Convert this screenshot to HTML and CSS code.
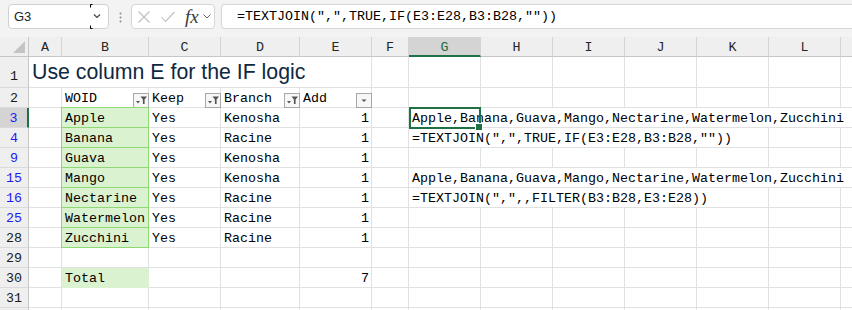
FILE: index.html
```html
<!DOCTYPE html>
<html lang="en">
<head>
  <meta charset="UTF-8" />
  <title>TEXTJOIN with IF</title>
  <link rel="stylesheet" href="styles.css">
</head>
<body>
  <div class="toolbar">
    <div class="namebox">
      <span class="ref">G3</span>
      <span class="drop">
        <svg width="19" height="23" viewBox="0 0 19 23">
          <path d="M1.5 2.5 V-0.5 H3.5 M1.5 20.5 V23.5 H3.5" stroke="#000" fill="none" />
          <polyline points="5,9.5 8,12.5 11,9.5" stroke="#444" stroke-width="1.2" fill="none" />
        </svg>
      </span>
    </div>
    <svg class="dots" width="3" height="11" viewBox="0 0 3 11">
      <circle cx="1.5" cy="1.5" r="1" fill="#8c8c8c" />
      <circle cx="1.5" cy="5.5" r="1" fill="#8c8c8c" />
      <circle cx="1.5" cy="9.5" r="1" fill="#8c8c8c" />
    </svg>
    <div class="fxbox">
      <svg class="x" width="12" height="12" viewBox="0 0 12 12">
        <path d="M0.5 0.5 L11.5 11.5 M11.5 0.5 L0.5 11.5" stroke="#bfbfbf" stroke-width="1.1" />
      </svg>
      <svg class="ok" width="14" height="12" viewBox="0 0 14 12">
        <polyline points="0.5,6 4.5,10.5 13.5,1" stroke="#bfbfbf" stroke-width="1.1" fill="none" />
      </svg>
      <span class="fx">fx</span>
      <svg class="chev" width="8" height="5" viewBox="0 0 8 5">
        <polyline points="0.5,0.5 4,4 7.5,0.5" stroke="#666" fill="none" />
      </svg>
    </div>
    <div class="formula">=TEXTJOIN(",",TRUE,IF(E3:E28,B3:B28,""))</div>
  </div>

  <div class="sheet">
    <!-- column headers -->
    <div class="corner">
      <svg width="29" height="20" viewBox="0 0 29 20"><polygon points="13,16 25,16 25,4" fill="#c4c4c4" /></svg>
    </div>
    <div class="hd">A</div>
    <div class="hd">B</div>
    <div class="hd">C</div>
    <div class="hd">D</div>
    <div class="hd">E</div>
    <div class="hd">F</div>
    <div class="hd on">G</div>
    <div class="hd">H</div>
    <div class="hd">I</div>
    <div class="hd">J</div>
    <div class="hd">K</div>
    <div class="hd">L</div>
    <div class="hd"></div>

    <!-- row 1 -->
    <div class="rh tall">1</div>
    <div class="c title">Use column E for the IF logic</div>
    <div class="c"></div><div class="c"></div><div class="c"></div><div class="c"></div>
    <div class="c"></div><div class="c"></div><div class="c"></div><div class="c"></div>

    <!-- row 2 -->
    <div class="rh">2</div>
    <div class="c"></div>
    <div class="c flt"><span>WOID</span><span class="fbtn"><svg width="14" height="13" viewBox="0 0 14 13"><polygon points="2,7 6,7 4,9.5" fill="#555" /><polygon points="6.5,2.5 13,2.5 10.6,5.4 10.6,10 8.9,10 8.9,5.4" fill="#555" /></svg></span></div>
    <div class="c flt"><span>Keep</span><span class="fbtn"><svg width="14" height="13" viewBox="0 0 14 13"><polygon points="2,7 6,7 4,9.5" fill="#555" /><polygon points="6.5,2.5 13,2.5 10.6,5.4 10.6,10 8.9,10 8.9,5.4" fill="#555" /></svg></span></div>
    <div class="c flt"><span>Branch</span><span class="fbtn"><svg width="14" height="13" viewBox="0 0 14 13"><polygon points="2,7 6,7 4,9.5" fill="#555" /><polygon points="6.5,2.5 13,2.5 10.6,5.4 10.6,10 8.9,10 8.9,5.4" fill="#555" /></svg></span></div>
    <div class="c flt"><span>Add</span><span class="fbtn"><svg width="14" height="13" viewBox="0 0 14 13"><polygon points="4.5,5.5 9.5,5.5 7,8" fill="#555" /></svg></span></div>
    <div class="c"></div><div class="c"></div><div class="c"></div><div class="c"></div>
    <div class="c"></div><div class="c"></div><div class="c"></div><div class="c"></div>

    <!-- row 3 -->
    <div class="rh f on">3</div>
    <div class="c"></div>
    <div class="c gb">Apple</div>
    <div class="c">Yes</div>
    <div class="c">Kenosha</div>
    <div class="c num">1</div>
    <div class="c"></div>
    <div class="c s7">Apple,Banana,Guava,Mango,Nectarine,Watermelon,Zucchini</div>

    <!-- row 4 -->
    <div class="rh f">4</div>
    <div class="c"></div>
    <div class="c gb">Banana</div>
    <div class="c">Yes</div>
    <div class="c">Racine</div>
    <div class="c num">1</div>
    <div class="c"></div>
    <div class="c s5">=TEXTJOIN(",",TRUE,IF(E3:E28,B3:B28,""))</div>
    <div class="c"></div><div class="c"></div>

    <!-- row 9 -->
    <div class="rh f">9</div>
    <div class="c"></div>
    <div class="c gb">Guava</div>
    <div class="c">Yes</div>
    <div class="c">Kenosha</div>
    <div class="c num">1</div>
    <div class="c"></div>
    <div class="c"></div><div class="c"></div><div class="c"></div><div class="c"></div>
    <div class="c"></div><div class="c"></div><div class="c"></div>

    <!-- row 15 -->
    <div class="rh f">15</div>
    <div class="c"></div>
    <div class="c gb">Mango</div>
    <div class="c">Yes</div>
    <div class="c">Kenosha</div>
    <div class="c num">1</div>
    <div class="c"></div>
    <div class="c s7">Apple,Banana,Guava,Mango,Nectarine,Watermelon,Zucchini</div>

    <!-- row 16 -->
    <div class="rh f">16</div>
    <div class="c"></div>
    <div class="c gb">Nectarine</div>
    <div class="c">Yes</div>
    <div class="c">Racine</div>
    <div class="c num">1</div>
    <div class="c"></div>
    <div class="c s5">=TEXTJOIN(",",,FILTER(B3:B28,E3:E28))</div>
    <div class="c"></div><div class="c"></div>

    <!-- row 25 -->
    <div class="rh f">25</div>
    <div class="c"></div>
    <div class="c gb">Watermelon</div>
    <div class="c">Yes</div>
    <div class="c">Racine</div>
    <div class="c num">1</div>
    <div class="c"></div>
    <div class="c"></div><div class="c"></div><div class="c"></div><div class="c"></div>
    <div class="c"></div><div class="c"></div><div class="c"></div>

    <!-- row 28 -->
    <div class="rh">28</div>
    <div class="c"></div>
    <div class="c gb">Zucchini</div>
    <div class="c">Yes</div>
    <div class="c">Racine</div>
    <div class="c num">1</div>
    <div class="c"></div>
    <div class="c"></div><div class="c"></div><div class="c"></div><div class="c"></div>
    <div class="c"></div><div class="c"></div><div class="c"></div>

    <!-- row 29 -->
    <div class="rh">29</div>
    <div class="c"></div><div class="c"></div><div class="c"></div><div class="c"></div>
    <div class="c"></div><div class="c"></div><div class="c"></div><div class="c"></div>
    <div class="c"></div><div class="c"></div><div class="c"></div><div class="c"></div>
    <div class="c"></div>

    <!-- row 30 -->
    <div class="rh">30</div>
    <div class="c"></div>
    <div class="c g">Total</div>
    <div class="c"></div>
    <div class="c"></div>
    <div class="c num">7</div>
    <div class="c"></div>
    <div class="c"></div><div class="c"></div><div class="c"></div><div class="c"></div>
    <div class="c"></div><div class="c"></div><div class="c"></div>

    <!-- row 31 -->
    <div class="rh">31</div>
    <div class="c"></div><div class="c"></div><div class="c"></div><div class="c"></div>
    <div class="c"></div><div class="c"></div><div class="c"></div><div class="c"></div>
    <div class="c"></div><div class="c"></div><div class="c"></div><div class="c"></div>
    <div class="c"></div>

    <!-- row 32, only its top edge shows -->
    <div class="rh"></div>
    <div class="c"></div><div class="c"></div><div class="c"></div><div class="c"></div>
    <div class="c"></div><div class="c"></div><div class="c"></div><div class="c"></div>
    <div class="c"></div><div class="c"></div><div class="c"></div><div class="c"></div>
    <div class="c"></div>

    <!-- active cell G3 -->
    <div class="sel"></div>
  </div>
</body>
</html>
```

FILE: styles.css
```css
* {
  box-sizing: border-box;
}
body {
  margin: 0;
  width: 852px;
  height: 310px;
  overflow: hidden;
  background: #fff;
  font-family: "Liberation Mono", monospace;
  font-size: 13.33px;
  color: #000;
}

/* formula bar */
.toolbar {
  display: flex;
  align-items: flex-start;
  height: 37px;
  padding: 4px 0 0 8px;
  background: #f3f3f3;
  overflow: hidden;
}
.namebox {
  display: flex;
  align-items: center;
  width: 101px;
  height: 25px;
  padding-left: 5px;
  background: #fff;
  border: 1px solid #d1d1d1;
  border-radius: 4px;
  font-family: "Liberation Sans", sans-serif;
  font-size: 13px;
  color: #222;
}
.namebox .ref {
  flex: 1;
}
.namebox .drop {
  display: flex;
  width: 19px;
  height: 23px;
}
.namebox .drop svg {
  overflow: visible;
}
.dots {
  margin: 8px 0 0 10px;
}
.fxbox {
  display: flex;
  align-items: center;
  width: 84px;
  height: 25px;
  margin-left: 9px;
  padding-left: 6px;
  background: #fff;
  border: 1px solid #d6d6d6;
  border-radius: 4px;
}
.fxbox .ok {
  margin-left: 11px;
}
.fxbox .fx {
  margin-left: 10px;
  font-family: "Liberation Serif", serif;
  font-style: italic;
  font-size: 19px;
  line-height: 23px;
  color: #3a3a3a;
}
.fxbox .chev {
  margin-left: 4px;
}
.formula {
  flex: 1;
  height: 25px;
  margin-left: 6px;
  padding: 1px 0 0 15px;
  line-height: 22px;
  white-space: nowrap;
  background: #fff;
  border: 1px solid #d6d6d6;
  border-right: none;
  border-radius: 4px 0 0 4px;
}

/* grid */
.sheet {
  position: relative;
  display: grid;
  grid-template-columns: 29px 33px 87px 72px 79px 72px 37px repeat(7, 72px);
  grid-template-rows: 20px 31px;
  grid-auto-rows: 20px;
}
.corner {
  background: #efefef;
  border-right: 1px solid #c6c6c6;
  border-bottom: 1px solid #c6c6c6;
}
.corner svg {
  display: block;
}
.hd {
  padding-top: 2px;
  line-height: 17px;
  text-align: center;
  color: #262626;
  background: #efefef;
  border-right: 1px solid #d4d4d4;
  border-bottom: 1px solid #c6c6c6;
}
.hd.on {
  color: #1d6b40;
  background: #d4d4d4;
  border-bottom: 2px solid #1e7145;
}
.rh {
  padding-top: 3px;
  line-height: 16px;
  text-align: center;
  color: #1a1a1a;
  background: #efefef;
  border-right: 1px solid #c6c6c6;
  border-bottom: 1px solid #dadada;
}
.rh.tall {
  padding-top: 12px;
}
.rh.f {
  color: #1c1cf0;
}
.rh.on {
  background: #d4d4d4;
  border-right: 2px solid #1e7145;
}
.c {
  padding: 3px 3px 0;
  line-height: 16px;
  white-space: nowrap;
  border-right: 1px solid #e1e1e1;
  border-bottom: 1px solid #e1e1e1;
}
.s5 {
  grid-column: span 5;
}
.s7 {
  grid-column: span 7;
}
.title {
  grid-column: span 5;
  padding: 0 3px;
  line-height: 31px;
  font-family: "Liberation Sans", sans-serif;
  font-size: 21.3px;
  color: #0e2841;
}
.num {
  padding-right: 2px;
  text-align: right;
}
.gb {
  margin: -1px 0 0 -1px;
  background: #daf2d0;
  border: 1px solid #8ed973;
}
.g {
  background: #daf2d0;
  border-color: #daf2d0;
}
.flt {
  display: flex;
  justify-content: space-between;
  padding-right: 0;
}
.fbtn {
  display: flex;
  align-items: center;
  justify-content: center;
  align-self: flex-end;
  width: 16px;
  height: 15px;
  margin: 0 -1px -1px 0;
  background: #f7f7f7;
  border: 1px solid #a8a8a8;
}
.sel {
  position: absolute;
  grid-column: 8 / 9;
  grid-row: 4 / 5;
  top: -1px;
  left: 0;
  right: 0;
  bottom: -1px;
  border: 2px solid #1e7145;
  pointer-events: none;
}
.sel::after {
  content: "";
  position: absolute;
  right: -4px;
  bottom: -4px;
  width: 6px;
  height: 6px;
  background: #1e7145;
  border: 1px solid #fff;
}
```
